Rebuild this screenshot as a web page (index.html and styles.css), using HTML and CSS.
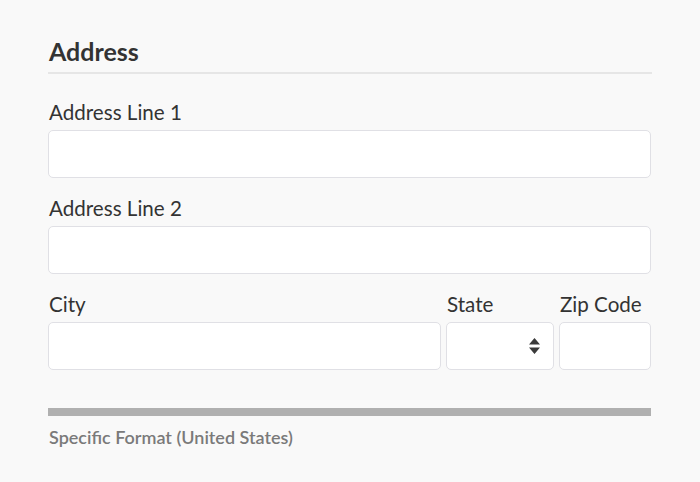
FILE: index.html
```html
<!DOCTYPE html>
<html>
<head>
<meta charset="utf-8">
<link rel="stylesheet" href="styles.css">
</head>
<body>
<div class="form">
  <h2 class="title">Address</h2>
  <div class="field">
    <label class="label">Address Line 1</label>
    <div class="input"></div>
  </div>
  <div class="field">
    <label class="label">Address Line 2</label>
    <div class="input"></div>
  </div>
  <div class="row">
    <div class="field city">
      <label class="label">City</label>
      <div class="input"></div>
    </div>
    <div class="field state">
      <label class="label">State</label>
      <div class="input select">
        <svg class="arrows" width="11" height="16" viewBox="0 0 11 16"><path d="M5.5 0 L11 6.5 L0 6.5 Z M0 9.5 L11 9.5 L5.5 16 Z" fill="#3a3a3a"/></svg>
      </div>
    </div>
    <div class="field zip">
      <label class="label">Zip Code</label>
      <div class="input"></div>
    </div>
  </div>
  <div class="bar"></div>
  <div class="note">Specific Format (United States)</div>
</div>
</body>
</html>
```
FILE: styles.css
```css
html, body {
  margin: 0;
  padding: 0;
  background: #f9f9f9;
  font-family: Lato, "Open Sans", sans-serif;
  color: #333;
}
.form {
  width: 603px;
  padding: 0 0 0 48px;
}
.title {
  margin: 0 0 8px;
  padding: 36px 0 0 1px;
  height: 36px;
  font-size: 25px;
  font-weight: 700;
  line-height: 30px;
  color: #333;
  border-bottom: 2px solid #e6e6e6;
  width: 603px;
  box-sizing: content-box;
}
.field {
  display: flex;
  flex-direction: column;
}
.label {
  display: block;
  font-size: 20.6px;
  line-height: 24px;
  height: 24px;
  padding: 18px 0 6px 1px;
  color: #333;
}
.input {
  height: 46px;
  border: 1px solid #e0e0e5;
  border-radius: 5px;
  background: #fff;
}
.row {
  display: flex;
  gap: 5px;
}
.city { width: 393px; flex: none; }
.state { width: 108px; flex: none; }
.zip { width: 92px; flex: none; }
.select {
  display: flex;
  align-items: center;
  justify-content: flex-end;
  padding-right: 13px;
}
.bar {
  margin-top: 38px;
  height: 8px;
  background: #b0b0b0;
}
.note {
  margin-top: 10px;
  padding-left: 1px;
  font-size: 18px;
  font-weight: 600;
  color: #7a7a7a;
}
```
